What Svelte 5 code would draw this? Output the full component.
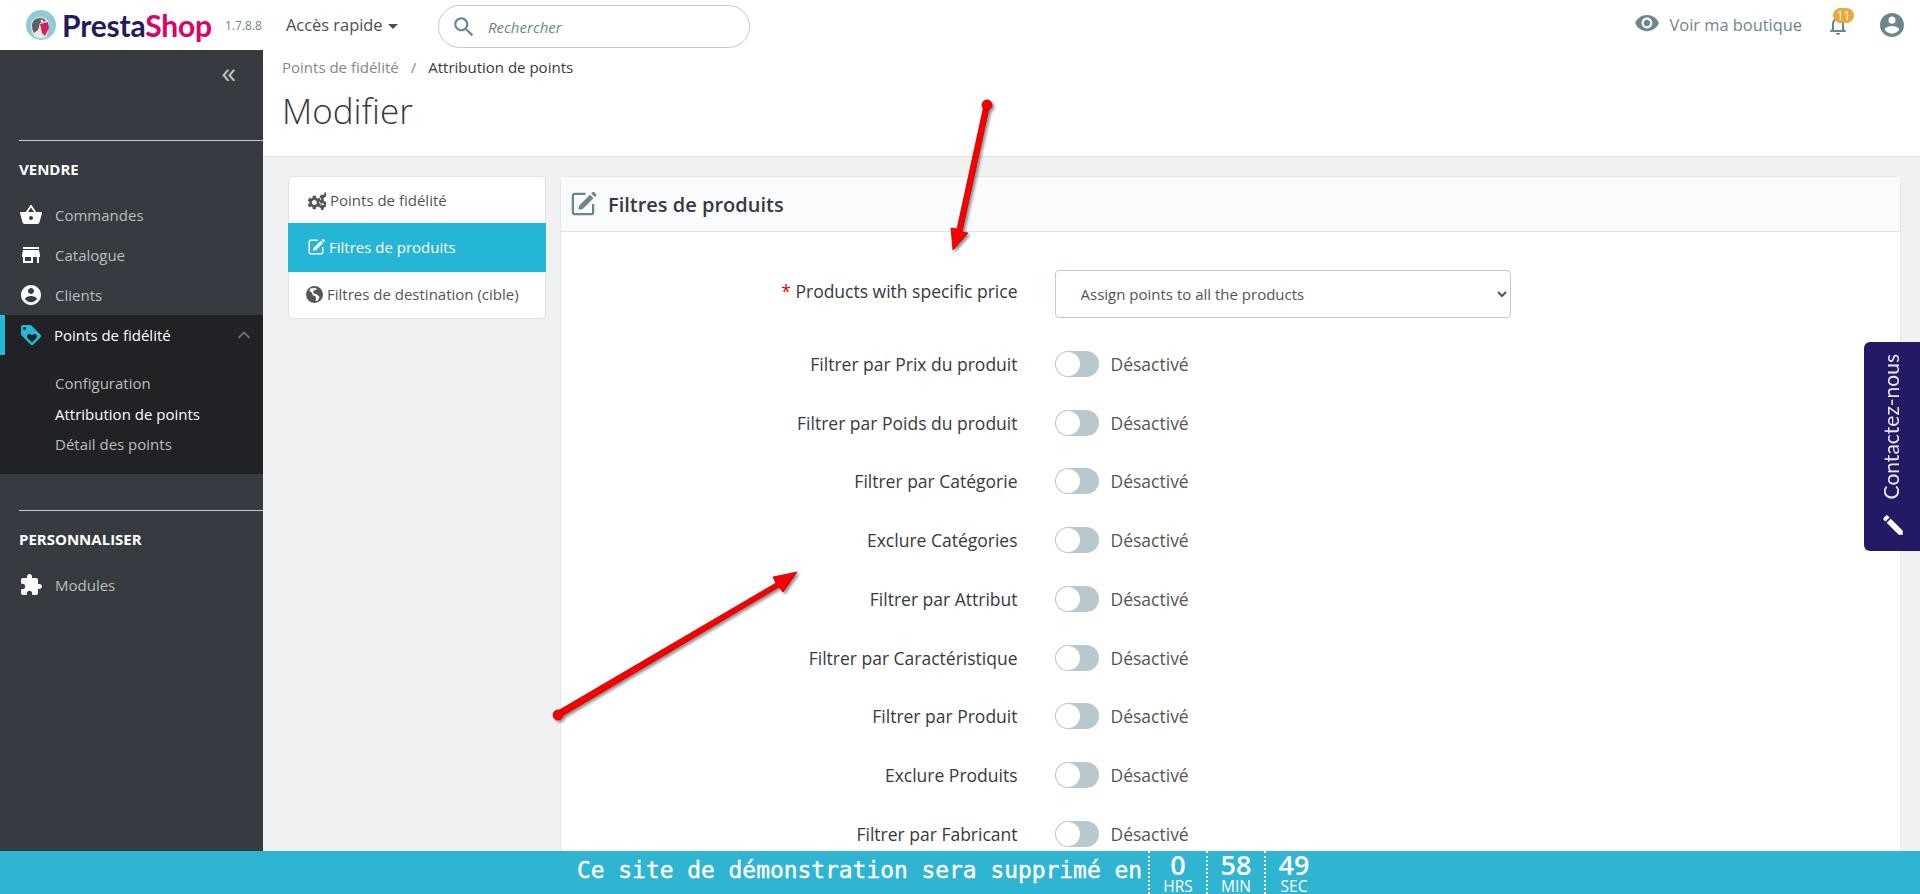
<script>
  const filters = [
    'Filtrer par Prix du produit',
    'Filtrer par Poids du produit',
    'Filtrer par Catégorie',
    'Exclure Catégories',
    'Filtrer par Attribut',
    'Filtrer par Caractéristique',
    'Filtrer par Produit',
    'Exclure Produits',
    'Filtrer par Fabricant',
  ];

  const icons = {
    basket: 'M17.21 9l-4.38-6.56c-.19-.28-.51-.42-.83-.42-.32 0-.64.14-.83.43L6.79 9H2c-.55 0-1 .45-1 1 0 .09.01.18.04.27l2.54 9.27c.23.84 1 1.46 1.92 1.46h13c.92 0 1.69-.62 1.93-1.46l2.54-9.27L23 10c0-.55-.45-1-1-1h-4.79zM9 9l3-4.4L15 9H9zm3 8c-1.1 0-2-.9-2-2s.9-2 2-2 2 .9 2 2-.9 2-2 2z',
    store: 'M20 4H4v2h16V4zm1 10v-2l-1-5H4l-1 5v2h1v6h10v-6h4v6h2v-6h1zm-9 4H6v-4h6v4z',
    account: 'M12 2C6.48 2 2 6.48 2 12s4.48 10 10 10 10-4.48 10-10S17.52 2 12 2zm0 3c1.66 0 3 1.34 3 3s-1.34 3-3 3-3-1.34-3-3 1.34-3 3-3zm0 14.2c-2.5 0-4.71-1.28-6-3.22.03-1.99 4-3.08 6-3.08 1.99 0 5.97 1.09 6 3.08-1.29 1.94-3.5 3.22-6 3.22z',
    extension: 'M20.5 11H19V7c0-1.1-.9-2-2-2h-4V3.5C13 2.12 11.88 1 10.5 1S8 2.12 8 3.5V5H4c-1.1 0-1.99.9-1.99 2v3.8H3.5c1.49 0 2.7 1.21 2.7 2.7s-1.21 2.7-2.7 2.7H2V20c0 1.1.9 2 2 2h3.8v-1.5c0-1.49 1.21-2.7 2.7-2.7 1.49 0 2.7 1.21 2.7 2.7V22H17c1.1 0 2-.9 2-2v-4h1.5c1.38 0 2.5-1.12 2.5-2.5S21.88 11 20.5 11z',
    loyalty: 'M21.41 11.58l-9-9C12.05 2.22 11.55 2 11 2H4c-1.1 0-2 .9-2 2v7c0 .55.22 1.05.59 1.42l9 9c.36.36.86.58 1.41.58.55 0 1.05-.22 1.41-.59l7-7c.37-.36.59-.86.59-1.41 0-.55-.23-1.06-.59-1.42zM5.500 7C4.670 7 4 6.330 4 5.500S4.670 4 5.500 4 7 4.670 7 5.500 6.330 7 5.500 7zm11.770 8.270L13 19.540l-4.270-4.270C8.280 14.810 8 14.190 8 13.500c0-1.380 1.120-2.500 2.500-2.500.69 0 1.320.28 1.770.74l.73.72.73-.73c.45-.45 1.080-.73 1.770-.73 1.380 0 2.500 1.120 2.500 2.500 0 .69-.28 1.320-.73 1.770z',
    eye: 'M12 4.5C7 4.5 2.73 7.61 1 12c1.73 4.39 6 7.5 11 7.5s9.27-3.11 11-7.5c-1.73-4.39-6-7.5-11-7.5zM12 17c-2.76 0-5-2.24-5-5s2.24-5 5-5 5 2.24 5 5-2.24 5-5 5zm0-8c-1.66 0-3 1.34-3 3s1.34 3 3 3 3-1.34 3-3-1.34-3-3-3z',
    bell: 'M12 22c1.1 0 2-.9 2-2h-4c0 1.1.9 2 2 2zm6-6v-5c0-3.07-1.63-5.64-4.5-6.32V4c0-.83-.67-1.5-1.5-1.5s-1.5.67-1.5 1.5v.68C7.64 5.36 6 7.92 6 11v5l-2 2v1h16v-1l-2-2zm-2 1H8v-6c0-2.48 1.51-4.5 4-4.5s4 2.02 4 4.5v6z',
    search: 'M15.5 14h-.79l-.28-.27C15.41 12.59 16 11.11 16 9.5 16 5.91 13.09 3 9.5 3S3 5.91 3 9.5 5.91 16 9.5 16c1.61 0 3.09-.59 4.23-1.57l.27.28v.79l5 4.99L20.49 19l-4.99-5zm-6 0C7.01 14 5 11.99 5 9.5S7.01 5 9.5 5 14 7.01 14 9.5 11.99 14 9.5 14z',
    less: 'M12 8l-6 6 1.41 1.41L12 10.83l4.59 4.58L18 14z',
    gear: 'M19.14 12.94c.04-.3.06-.61.06-.94 0-.32-.02-.64-.07-.94l2.03-1.58c.18-.14.23-.41.12-.61l-1.92-3.32c-.12-.22-.37-.29-.59-.22l-2.39.96c-.5-.38-1.03-.7-1.62-.94l-.36-2.54c-.04-.24-.24-.41-.48-.41h-3.84c-.24 0-.43.17-.47.41l-.36 2.54c-.59.24-1.13.57-1.62.94l-2.39-.96c-.22-.08-.47 0-.59.22L2.74 8.87c-.12.21-.08.47.12.61l2.03 1.58c-.05.3-.09.63-.09.94s.02.64.07.94l-2.03 1.58c-.18.14-.23.41-.12.61l1.92 3.32c.12.22.37.29.59.22l2.39-.96c.5.38 1.03.7 1.62.94l.36 2.54c.05.24.24.41.48.41h3.84c.24 0 .44-.17.47-.41l.36-2.54c.59-.24 1.13-.56 1.62-.94l2.39.96c.22.08.47 0 .59-.22l1.92-3.32c.12-.22.07-.47-.12-.61l-2.01-1.58zM12 15.6c-1.98 0-3.6-1.62-3.6-3.6s1.62-3.6 3.6-3.6 3.6 1.62 3.6 3.6-1.62 3.6-3.6 3.6z',
    pencil: 'M3 17.25V21h3.75L17.81 9.94l-3.75-3.75L3 17.25zM20.71 7.04c.39-.39.39-1.02 0-1.41l-2.34-2.34c-.39-.39-1.02-.39-1.41 0l-1.83 1.83 3.75 3.75 1.83-1.83z',
  };

  const editSquare = 'M3 5.5A2.5 2.5 0 0 1 5.5 3H14v1.8H5.5a.7.7 0 0 0-.7.7v13a.7.7 0 0 0 .7.7h13a.7.7 0 0 0 .7-.7V12H21v6.5a2.5 2.5 0 0 1-2.5 2.5h-13A2.5 2.5 0 0 1 3 18.5zM9 13.2l8.6-8.6 2.8 2.8-8.6 8.6-3.4.6zM18.6 3.6l1-1a1 1 0 0 1 1.4 0l1.4 1.4a1 1 0 0 1 0 1.4l-1 1z';
</script>

<div class="page">
  <header class="topbar">
    <div class="logo">
      <svg class="logo-mark" viewBox="0 0 30 30" aria-hidden="true">
        <circle cx="15" cy="15" r="15" fill="#8fcbd6" />
        <path d="M5 15c0-5 4-8 9-8s9 3 9 7l-2 12c-3 3-10 3-13 0-2-3-3-7-3-11z" fill="#e9e8e4" />
        <path d="M6 16c0-5 3-8 8-8 3 0 5 1 6 3l-6 2-2 7-4 3c-1-2-2-4-2-7z" fill="#5d6066" />
        <path d="M14 14l8-2 1 6-4 8-3-3z" fill="#d81f63" />
        <circle cx="16" cy="11" r="1.300" fill="#fff" />
      </svg>
      <span class="logo-text"><span class="presta">Presta</span><span class="shop">Shop</span></span>
    </div>
    <span class="version">1.7.8.8</span>
    <span class="quick">Accès rapide<i class="caret"></i></span>
    <div class="search">
      <svg viewBox="0 0 24 24" aria-hidden="true"><path d={icons.search} /></svg>
      <span>Rechercher</span>
    </div>
    <div class="top-right">
      <svg class="eye" viewBox="0 0 24 24" aria-hidden="true"><path d={icons.eye} /></svg>
      <span class="shop-link">Voir ma boutique</span>
      <div class="bell">
        <svg viewBox="0 0 24 24" aria-hidden="true"><path d={icons.bell} /></svg>
        <span class="badge">11</span>
      </div>
      <svg class="avatar" viewBox="2 2 20 20" aria-hidden="true"><path d={icons.account} /></svg>
    </div>
  </header>

  <div class="body">
    <nav class="sidebar">
      <div class="collapse">«</div>
      <div class="section">
        <h4>VENDRE</h4>
        <div class="item"><svg viewBox="0 0 24 24" aria-hidden="true"><path d={icons.basket} /></svg>Commandes</div>
        <div class="item"><svg viewBox="0 0 24 24" aria-hidden="true"><path d={icons.store} /></svg>Catalogue</div>
        <div class="item"><svg viewBox="0 0 24 24" aria-hidden="true"><path d={icons.account} /></svg>Clients</div>
      </div>
      <div class="active-group">
        <div class="item active">
          <svg viewBox="0 0 24 24" aria-hidden="true"><path d={icons.loyalty} /></svg>
          <span>Points de fidélité</span>
          <svg class="chev" viewBox="0 0 24 24" aria-hidden="true"><path d={icons.less} /></svg>
        </div>
        <div class="sub">
          <div>Configuration</div>
          <div class="current">Attribution de points</div>
          <div>Détail des points</div>
        </div>
      </div>
      <div class="section second">
        <h4>PERSONNALISER</h4>
        <div class="item"><svg viewBox="0 0 24 24" aria-hidden="true"><path d={icons.extension} /></svg>Modules</div>
      </div>
    </nav>

    <main class="content">
      <div class="page-head">
        <div class="crumbs"><span class="muted">Points de fidélité</span><span class="slash">/</span><span>Attribution de points</span></div>
        <h1>Modifier</h1>
      </div>

      <div class="columns">
        <div class="tabs">
          <div class="tab">
            <svg class="cogs" viewBox="0 0 24 24" aria-hidden="true">
              <svg x="0" y="5" width="16" height="16" viewBox="0 0 24 24"><path d={icons.gear} /></svg>
              <svg x="14" y="1" width="10" height="10" viewBox="0 0 24 24"><path d={icons.gear} /></svg>
              <svg x="14" y="13" width="10" height="10" viewBox="0 0 24 24"><path d={icons.gear} /></svg>
            </svg>
            Points de fidélité
          </div>
          <div class="tab on">
            <svg viewBox="0 0 24 24" aria-hidden="true"><path d={editSquare} /></svg>
            Filtres de produits
          </div>
          <div class="tab dest">
            <svg class="globe" viewBox="2 2 20 20" aria-hidden="true">
              <path fill-rule="evenodd" d="M12 2a10 10 0 1 1 0 20 10 10 0 0 1 0-20zM7 5l-1 3 3 2 1 3 3 1 1 3-1 3 3-1 2-4-3-3-3-1-2-2 2-2 3-1-2-2z" />
            </svg>
            Filtres de destination (cible)
          </div>
        </div>

        <section class="panel">
          <div class="panel-head">
            <svg viewBox="0 0 24 24" aria-hidden="true"><path d={editSquare} /></svg>
            <span>Filtres de produits</span>
          </div>
          <div class="form">
            <div class="row first">
              <label for="price"><span class="req">*</span> Products with specific price</label>
              <select id="price"><option>Assign points to all the products</option></select>
            </div>
            {#each filters as f}
              <div class="row">
                <span class="lbl">{f}</span>
                <span class="switch"><i></i></span>
                <span class="state">Désactivé</span>
              </div>
            {/each}
          </div>
        </section>
      </div>
    </main>
  </div>

  <svg class="arrows" viewBox="0 0 1920 894" aria-hidden="true">
    <defs>
      <filter id="sh" x="-20%" y="-20%" width="140%" height="140%">
        <feDropShadow dx="2" dy="2" stdDeviation="1.5" flood-color="#000" flood-opacity="0.45" />
      </filter>
    </defs>
    <g filter="url(#sh)" fill="#f80000" stroke="#c00000" stroke-width="0.8">
      <path d="M984 105 L989.500 106 L962 232 L968 233 L953 250 L951 228 L957 229z" />
      <circle cx="987" cy="105" r="5" />
      <path d="M556 712 L776 583 L773 577 L797 572 L783 592 L779 587 L559 718z" />
      <circle cx="558" cy="715" r="5" />
    </g>
  </svg>

  <aside class="contact">
    <span>Contactez-nous</span>
    <svg viewBox="0 0 24 24" aria-hidden="true"><path d={icons.pencil} /></svg>
  </aside>

  <footer class="demo">
    <span class="msg">Ce site de démonstration sera supprimé en</span>
    <div class="unit"><b>0</b><small>HRS</small></div>
    <div class="unit"><b>58</b><small>MIN</small></div>
    <div class="unit"><b>49</b><small>SEC</small></div>
  </footer>
</div>

<style>
  :global(body) {
    margin: 0;
    background: #eff1f2;
    font-family: "Open Sans", "Liberation Sans", sans-serif;
    color: #363a41;
  }

  .page {
    height: 894px;
    overflow: hidden;
    position: relative;
    display: flex;
    flex-direction: column;
  }

  /* top bar */
  .topbar {
    height: 50px;
    flex: none;
    background: #fff;
    display: flex;
    align-items: center;
    padding-left: 26px;
  }

  .logo {
    display: flex;
    align-items: center;
    gap: 6px;
    width: 199px;
  }

  .logo-mark {
    width: 30px;
    height: 30px;
    flex: none;
  }

  .logo-text {
    font-family: "Lato", sans-serif;
    font-weight: 700;
    font-size: 30px;
    letter-spacing: -0.2px;
    line-height: 1;
  }

  .presta { color: #251b5b; }
  .shop { color: #df0067; }

  .version {
    font-size: 12px;
    color: #6c868e;
    width: 61px;
  }

  .quick {
    font-size: 16.400px;
    color: #4a4f56;
    width: 152px;
    margin-top: -2px;
  }

  .caret {
    display: inline-block;
    margin-left: 5px;
    border: 5px solid transparent;
    border-top-color: #4a4f56;
    border-bottom: 0;
    vertical-align: 2px;
  }

  .search {
    width: 312px;
    height: 43px;
    margin-top: 3px;
    box-sizing: border-box;
    border: 1px solid #bbcdd2;
    border-radius: 22px;
    display: flex;
    align-items: center;
    padding-left: 12px;
    gap: 11px;
    font-size: 15px;
    font-style: italic;
    color: #6c868e;
  }

  .search svg {
    width: 26px;
    height: 26px;
    fill: #6c868e;
  }

  .top-right {
    margin-left: auto;
    display: flex;
    align-items: center;
    padding-right: 16px;
  }

  .eye {
    width: 26px;
    height: 26px;
    fill: #6c868e;
    margin-top: -5px;
  }

  .shop-link {
    font-size: 16.400px;
    color: #6c868e;
    margin: -2px 24px 0 10px;
  }

  .bell {
    position: relative;
    width: 24px;
    height: 24px;
    margin-right: 30px;
  }

  .bell svg {
    width: 24px;
    height: 24px;
    fill: #6c868e;
  }

  .badge {
    position: absolute;
    left: 7px;
    top: -5px;
    width: 21px;
    height: 15px;
    border-radius: 8px;
    background: #e8a93a;
    color: #fff;
    font-size: 12px;
    line-height: 15px;
    text-align: center;
  }

  .avatar {
    width: 24px;
    height: 24px;
    fill: #6c868e;
  }

  .body {
    flex: 1;
    display: flex;
    min-height: 0;
  }

  /* sidebar */
  .sidebar {
    width: 263px;
    flex: none;
    background: #363a41;
    color: #bebebe;
    font-size: 15px;
  }

  .collapse {
    height: 90px;
    box-sizing: border-box;
    padding: 0 27px 0 0;
    text-align: right;
    font-size: 30px;
    line-height: 44px;
    color: #bebebe;
  }

  .section {
    margin-left: 19px;
    border-top: 1px solid #bbcdd2;
  }

  .section h4 {
    margin: 0;
    color: #fff;
    font-size: 15px;
    font-weight: 700;
    line-height: 20px;
    padding-top: 18px;
    padding-bottom: 16px;
  }

  .item {
    display: flex;
    align-items: center;
    height: 40px;
    gap: 12px;
  }

  .item svg {
    width: 24px;
    height: 24px;
    fill: #fff;
    flex: none;
  }

  .active-group {
    background: #202226;
    height: 159px;
  }

  .item.active {
    border-left: 5px solid #25b9d7;
    padding-left: 14px;
    color: #fff;
    gap: 11px;
  }

  .item.active svg {
    fill: #25b9d7;
  }

  .item.active svg.chev {
    fill: #6c6f75;
    margin-left: auto;
    margin-right: 7px;
  }

  .sub {
    padding: 13px 0 0 55px;
  }

  .sub div {
    line-height: 30.500px;
  }

  .sub .current { color: #fff; }

  .second { margin-top: 36px; }

  /* content */
  .content {
    flex: 1;
    min-width: 0;
  }

  .page-head {
    height: 106px;
    background: #fff;
    border-bottom: 1px solid #dfe3e4;
    padding-left: 19px;
  }

  .crumbs {
    padding-top: 7px;
    font-size: 15px;
    line-height: 20px;
  }

  .crumbs .muted { color: #7c8a8e; }
  .crumbs .slash { color: #7c8a8e; margin: 0 12px; }

  h1 {
    margin: 10px 0 0;
    font-size: 35px;
    font-weight: 300;
    line-height: 48px;
    color: #363a41;
  }

  .columns {
    display: flex;
    padding: 19px 19px 0 25px;
    gap: 14px;
    align-items: flex-start;
  }

  .tabs {
    width: 258px;
    flex: none;
    background: #fff;
    border: 1px solid #dfe3e4;
    border-radius: 5px;
    box-sizing: border-box;
    font-size: 15px;
  }

  .tab {
    display: flex;
    align-items: center;
    gap: 4px;
    height: 46px;
    box-sizing: border-box;
    padding-left: 17px;
    color: #555;
  }

  .tab svg {
    width: 20px;
    height: 20px;
    fill: #555;
    flex: none;
  }

  .tab svg.globe {
    width: 17px;
    height: 17px;
  }

  .tab.dest { padding-bottom: 2px; }

  .tab.on {
    height: 49px;
    margin: 0 -1px;
    padding: 0 0 2px 18px;
    gap: 3px;
    background: #25b5d5;
    color: #fff;
  }

  .tab.on svg { fill: #fff; }

  .panel {
    flex: 1;
    background: #fff;
    border: 1px solid #e4e7e9;
    border-radius: 5px 5px 0 0;
    min-height: 800px;
  }

  .panel-head {
    height: 55px;
    box-sizing: border-box;
    background: #fafbfc;
    border-bottom: 1px solid #dfe3e4;
    display: flex;
    align-items: center;
    gap: 10px;
    padding-left: 7px;
    font-size: 20px;
    font-weight: 600;
    color: #363a41;
  }

  .panel-head svg {
    width: 30px;
    height: 30px;
    fill: #6c868e;
  }

  .form {
    padding-top: 38px;
  }

  .row {
    display: flex;
    align-items: center;
    height: 58.750px;
    font-size: 17.500px;
    color: #363a41;
  }

  .row.first {
    height: 48px;
    margin-bottom: 16.500px;
  }

  .row label, .lbl {
    width: 456.500px;
    text-align: right;
    flex: none;
  }

  .row label { margin-top: -6px; }

  .req { color: #e00; }

  select {
    margin-left: 37px;
    width: 456px;
    height: 48px;
    border: 1px solid #bbcdd2;
    border-radius: 4px;
    background: #fff;
    padding-left: 21px;
    font-family: inherit;
    font-size: 15px;
    color: #555;
  }

  .switch {
    margin-left: 37px;
    width: 44px;
    height: 26px;
    border-radius: 13px;
    background: #b7c9cf;
    position: relative;
    flex: none;
  }

  .switch i {
    position: absolute;
    left: 1px;
    top: 1px;
    width: 24px;
    height: 24px;
    border-radius: 50%;
    background: #fff;
  }

  .state {
    margin-left: 12px;
    color: #555;
  }

  /* overlays */
  .arrows {
    position: absolute;
    inset: 0;
    width: 1920px;
    height: 894px;
    pointer-events: none;
  }

  .contact {
    position: absolute;
    right: 0;
    top: 342px;
    width: 56px;
    height: 209px;
    box-sizing: border-box;
    padding: 12px 4px 0 0;
    background: #231a66;
    border-radius: 6px 0 0 6px;
    display: flex;
    flex-direction: column;
    align-items: center;
    color: #e9e8f2;
  }

  .contact span {
    writing-mode: vertical-rl;
    transform: rotate(180deg);
    font-family: "Lato", sans-serif;
    font-size: 21px;
  }

  .contact svg {
    width: 26px;
    height: 26px;
    fill: #fff;
    position: absolute;
    bottom: 13px;
    left: 16px;
    transform: rotate(-90deg);
  }

  .demo {
    position: absolute;
    left: 0;
    right: 0;
    bottom: 0;
    height: 43px;
    background: #2fb5d2;
    color: #fff;
    display: flex;
    justify-content: center;
    padding-right: 21px;
  }

  .msg {
    font-family: "DejaVu Sans Mono", monospace;
    font-size: 22.900px;
    -webkit-text-stroke: 0.4px #fff;
    line-height: 38px;
    margin-right: 6px;
  }

  .unit {
    width: 56px;
    border-left: 2px dotted #fff;
    display: flex;
    flex-direction: column;
    align-items: center;
  }

  .unit b {
    font-size: 27px;
    line-height: 27px;
    font-weight: 600;
  }

  .unit small {
    font-size: 15.500px;
    line-height: 16px;
  }
</style>
